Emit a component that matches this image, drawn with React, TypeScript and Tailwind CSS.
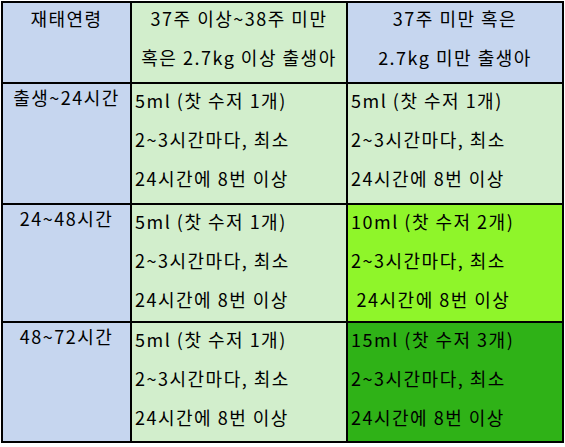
const FONT = '[font-family:"Noto_Sans_CJK_KR","Noto_Sans",sans-serif]';

type Cell = { lines: string[]; bg: string; center?: boolean };

const rows: Cell[][] = [
  [
    { lines: ['재태연령'], bg: 'bg-[#c6d6ef]', center: true },
    { lines: ['37주 이상~38주 미만', '혹은 2.7kg 이상 출생아'], bg: 'bg-[#d2eecc]', center: true },
    { lines: ['37주 미만 혹은', '2.7kg 미만 출생아'], bg: 'bg-[#c6d6ef]', center: true },
  ],
  [
    { lines: ['출생~24시간'], bg: 'bg-[#c6d6ef]', center: true },
    { lines: ['5ml (찻 수저 1개)', '2~3시간마다, 최소', '24시간에 8번 이상'], bg: 'bg-[#d2eecc]' },
    { lines: ['5ml (찻 수저 1개)', '2~3시간마다, 최소', '24시간에 8번 이상'], bg: 'bg-[#d2eecc]' },
  ],
  [
    { lines: ['24~48시간'], bg: 'bg-[#c6d6ef]', center: true },
    { lines: ['5ml (찻 수저 1개)', '2~3시간마다, 최소', '24시간에 8번 이상'], bg: 'bg-[#d2eecc]' },
    { lines: ['10ml (찻 수저 2개)', '2~3시간마다, 최소', '\u00a024시간에 8번 이상'], bg: 'bg-[#8ff52a]' },
  ],
  [
    { lines: ['48~72시간'], bg: 'bg-[#c6d6ef]', center: true },
    { lines: ['5ml (찻 수저 1개)', '2~3시간마다, 최소', '24시간에 8번 이상'], bg: 'bg-[#d2eecc]' },
    { lines: ['15ml (찻 수저 3개)', '2~3시간마다, 최소', '24시간에 8번 이상'], bg: 'bg-[#2fb217]' },
  ],
];

export default function App() {
  return (
    <div className={`w-[565px] h-[447px] bg-white ${FONT} text-[18px] tracking-[1.5px] text-black`}>
      <div className="ml-[1px] pt-[1px]">
        <div className="inline-grid grid-cols-[127px_214px_214px] grid-rows-[79px_119px_116px_118px] gap-[2px] p-[2px] bg-black">
          {rows.map((row, r) =>
            row.map((cell, c) => (
              <div
                key={`${r}-${c}`}
                className={`${cell.bg} flex flex-col gap-[13px] overflow-hidden whitespace-nowrap ${
                  cell.center ? 'items-center' : 'items-start pl-[3px]'
                } ${r === 0 ? 'pt-[2px]' : c === 0 ? 'pt-0' : 'pt-[3px]'}`}
              >
                {cell.lines.map((t, i) => (
                  <div key={i} className="leading-[26px]">
                    {t}
                  </div>
                ))}
              </div>
            ))
          )}
        </div>
      </div>
    </div>
  );
}
